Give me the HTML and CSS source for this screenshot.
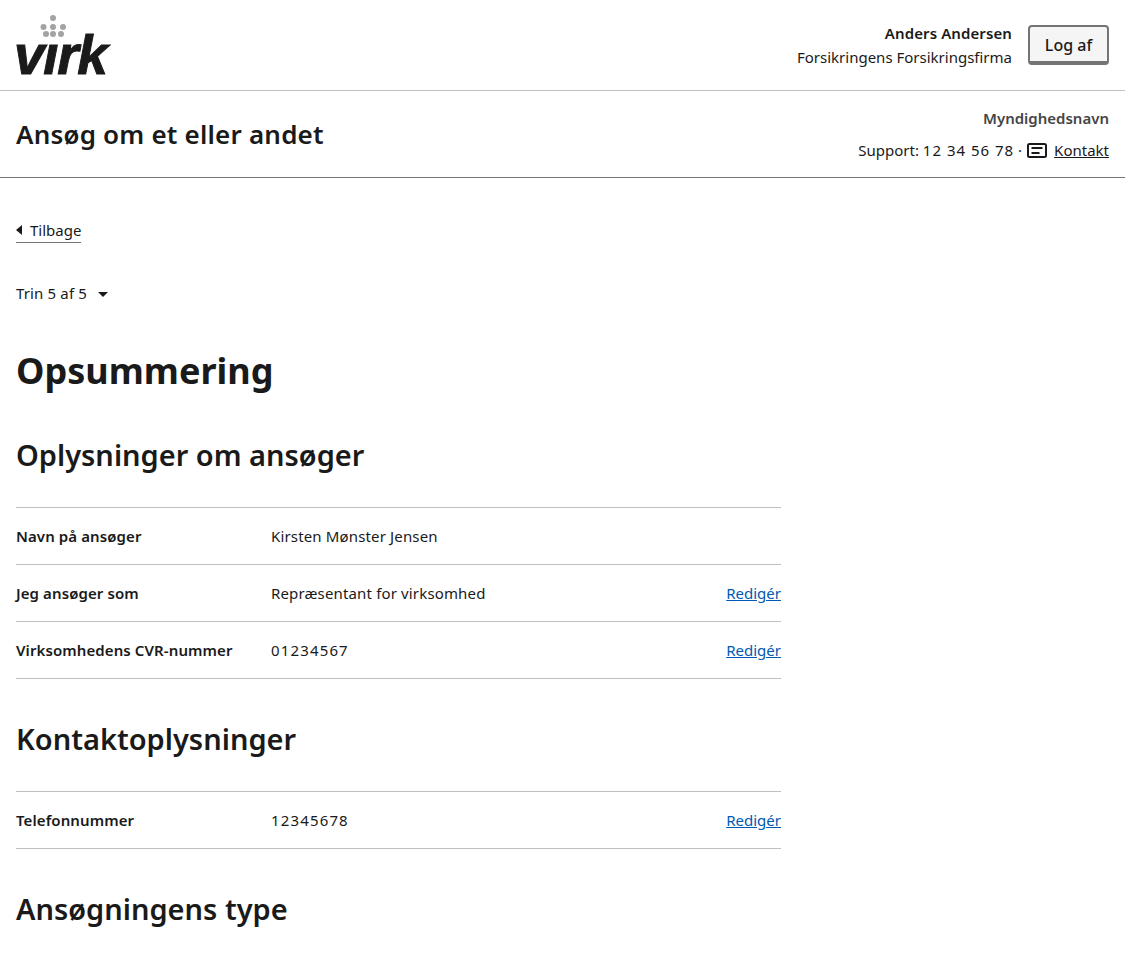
FILE: index.html
```html
<!DOCTYPE html>
<html lang="da">
<head>
    <meta charset="UTF-8">
    <meta name="viewport" content="width=device-width, initial-scale=1.0">
    <title>Opsummering</title>
    <link rel="stylesheet" href="styles.css">
</head>
<body>
    <header class="portal-header">
        <div class="logo" aria-label="virk">
            <svg class="logo-dots" width="28" height="24" viewBox="0 0 28 24" aria-hidden="true">
                <g fill="#a3a3a3">
                    <circle cx="14" cy="4" r="3"/>
                    <circle cx="4.500" cy="13" r="3"/>
                    <circle cx="14" cy="13" r="3"/>
                    <circle cx="24" cy="13" r="3"/>
                    <circle cx="7" cy="20" r="3"/>
                    <circle cx="14" cy="20" r="3"/>
                    <circle cx="22" cy="20" r="3"/>
                </g>
            </svg>
            <span class="logo-text">vırk</span>
        </div>
        <div class="user">
            <div class="user-info">
                <strong>Anders Andersen</strong>
                <span>Forsikringens Forsikringsfirma</span>
            </div>
            <button class="logout">Log af</button>
        </div>
    </header>

    <div class="solution-header">
        <div class="solution-name">Ansøg om et eller andet</div>
        <div class="solution-info">
            <strong>Myndighedsnavn</strong>
            <div class="support">
                <span>Support: <span class="num">12 34 56 78</span> ·</span>
                <svg class="contact-icon" width="20" height="15" viewBox="0 0 20 15" aria-hidden="true">
                    <rect x="1" y="1" width="18" height="13" rx="1.500" fill="none" stroke="#1a1a1a" stroke-width="2"/>
                    <path d="M4.500 5h11M4.500 10h8" stroke="#1a1a1a" stroke-width="2"/>
                </svg>
                <a href="#">Kontakt</a>
            </div>
        </div>
    </div>

    <main class="content">
        <a class="back-link" href="#"><span class="arrow-left"></span>Tilbage</a>
        <div class="step">Trin 5 af 5<span class="arrow-down"></span></div>

        <h1>Opsummering</h1>

        <h2>Oplysninger om ansøger</h2>
        <div class="summary">
            <div class="row"><div class="key">Navn på ansøger</div><div class="value">Kirsten Mønster Jensen</div></div>
            <div class="row"><div class="key">Jeg ansøger som</div><div class="value">Repræsentant for virksomhed</div><a href="#">Redigér</a></div>
            <div class="row"><div class="key">Virksomhedens CVR-nummer</div><div class="value num">01234567</div><a href="#">Redigér</a></div>
        </div>

        <h2>Kontaktoplysninger</h2>
        <div class="summary">
            <div class="row"><div class="key">Telefonnummer</div><div class="value num">12345678</div><a href="#">Redigér</a></div>
        </div>

        <h2>Ansøgningens type</h2>
    </main>
</body>
</html>
```

FILE: styles.css
```css
body {
    font-family: "Noto Sans", Arial, sans-serif;
    font-size: 15px;
    color: #1a1a1a;
    background-color: #fff;
    margin: 0;
    height: 961px;
    overflow: hidden;
}
.portal-header {
    display: flex;
    justify-content: space-between;
    align-items: flex-start;
    height: 90px;
    padding: 0 16px;
    border-bottom: 1px solid #bfbfbf;
}
.logo {
    position: relative;
    width: 96px;
    height: 90px;
}
.logo-dots {
    position: absolute;
    left: 23px;
    top: 14px;
}
.logo-text {
    position: absolute;
    left: -2px;
    top: 28px;
    font-family: "Liberation Sans", Arial, sans-serif;
    font-size: 55px;
    line-height: 55px;
    font-weight: bold;
    font-style: italic;
    letter-spacing: -1.300px;
    -webkit-text-stroke: 1px #1a1a1a;
}
.user {
    display: flex;
    align-items: center;
    gap: 16px;
    margin-top: 23px;
}
.user-info {
    display: flex;
    flex-direction: column;
    align-items: flex-end;
    gap: 4px;
    line-height: 20px;
}
.user-info strong {
    font-weight: 600;
    letter-spacing: .1px;
}
.logout {
    width: 81px;
    height: 40px;
    font-family: inherit;
    font-size: 16px;
    font-weight: 500;
    color: #1a1a1a;
    background-color: #f5f5f5;
    border: 2px solid #747474;
    border-bottom-width: 4px;
    border-radius: 4px;
    padding: 1px 0 0;
    cursor: pointer;
}
.solution-header {
    display: flex;
    justify-content: space-between;
    align-items: center;
    height: 86px;
    padding: 0 16px;
    border-bottom: 1px solid #747474;
}
.solution-name {
    font-size: 26px;
    font-weight: 600;
    letter-spacing: .2px;
}
.solution-info {
    display: flex;
    flex-direction: column;
    align-items: flex-end;
    gap: 12px;
    line-height: 20px;
}
.solution-info strong {
    font-weight: 600;
    color: #454545;
}
.support {
    display: flex;
    align-items: center;
    gap: 5px;
}
.contact-icon {
    margin: 0 2px 0 0;
}
.support a {
    color: #1a1a1a;
}
.num {
    letter-spacing: 1px;
}
.content {
    width: 765px;
    padding: 42px 16px 0;
}
.back-link {
    display: flex;
    width: fit-content;
    height: 22px;
    line-height: 20px;
    color: #1a1a1a;
    text-decoration: none;
    border-bottom: 1px solid #747474;
}
.arrow-left {
    width: 0;
    height: 0;
    margin: 5px 8px 0 0;
    border-top: 5px solid transparent;
    border-bottom: 5px solid transparent;
    border-right: 6px solid #1a1a1a;
}
.step {
    display: flex;
    align-items: center;
    margin-top: 40px;
    line-height: 20px;
    letter-spacing: .15px;
}
.arrow-down {
    width: 0;
    height: 0;
    margin: 3px 0 0 11px;
    border-left: 5px solid transparent;
    border-right: 5px solid transparent;
    border-top: 5px solid #1a1a1a;
}
h1 {
    font-size: 36px;
    line-height: 48px;
    font-weight: 700;
    margin: 44px 0 0;
}
h2 {
    font-size: 29px;
    line-height: 40px;
    font-weight: 600;
    margin: 40px 0 32px;
}
.summary {
    border-top: 1px solid #bfbfbf;
}
.row {
    display: flex;
    align-items: center;
    height: 56px;
    border-bottom: 1px solid #bfbfbf;
}
.key {
    width: 255px;
    flex-shrink: 0;
    font-weight: 600;
    letter-spacing: .1px;
}
.value {
    flex: 1;
    letter-spacing: .15px;
}
.value.num {
    letter-spacing: 1.150px;
}
.row a {
    color: #0059b3;
}
```
